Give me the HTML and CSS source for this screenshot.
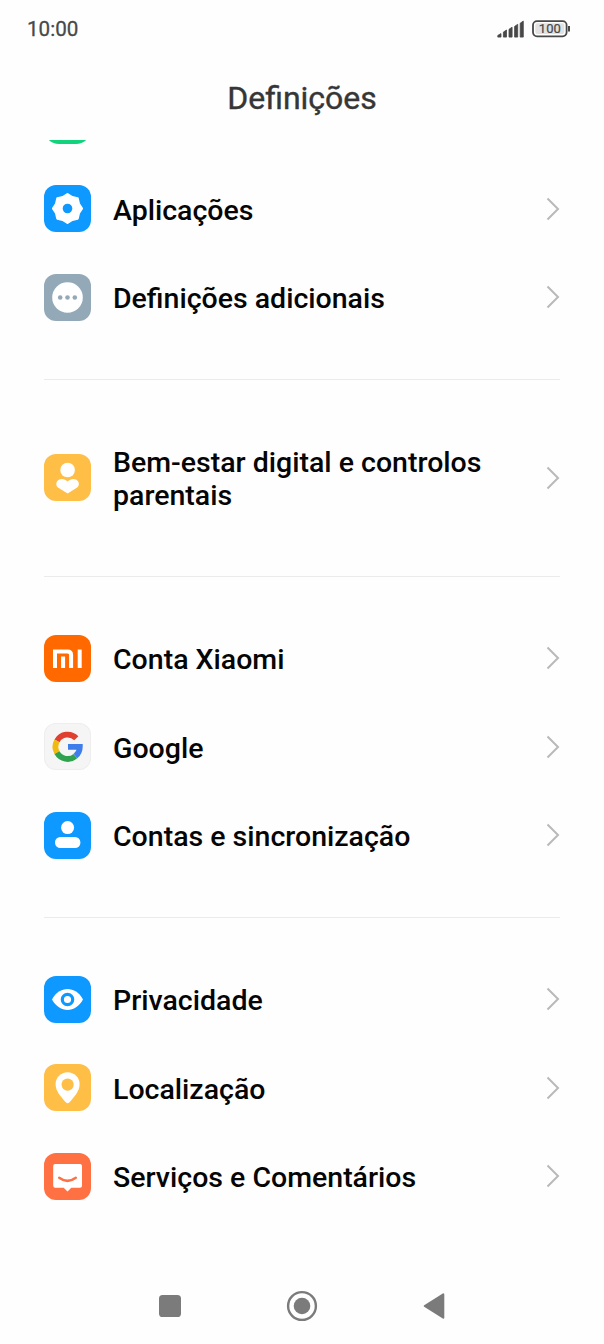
FILE: index.html
```html
<!DOCTYPE html>
<html lang="pt">
<head>
<meta charset="utf-8">
<title>Definições</title>
<link rel="stylesheet" href="styles.css">
</head>
<body>
<div class="screen">
  <div class="status">
    <span class="clock">10:00</span>
    <div class="indicators">
      <svg class="signal" width="27" height="18" viewBox="0 0 27 18" fill="#484848" stroke="#484848" stroke-width="0.8" stroke-linejoin="round">
        <path d="M0.8 15.4 4 13.6V17.1H0.8ZM6.4 12.1 9.5 10V17.1H6.4ZM12 9.3 15.1 7.2V17.1H12ZM17.6 6.4 20.7 4.3V17.1H17.6ZM23.2 3.2 26.3 1.1V17.1H23.2Z"/>
      </svg>
      <svg class="battery" width="40" height="18" viewBox="0 0 40 18">
        <rect x="1" y="1.1" width="33.6" height="15.2" rx="4" fill="#fff" stroke="#484848" stroke-width="1.8"/>
        <rect x="3.3" y="3.3" width="29" height="10.8" rx="2" fill="#e2e2e2"/>
        <path d="M37 6v5.4" stroke="#484848" stroke-width="2"/>
        <text class="level" x="17.8" y="13.2" text-anchor="middle">100</text>
      </svg>
    </div>
  </div>
  <h1 class="title">Definições</h1>
  <main class="list">
    <div class="row row-cut"><span class="icon green"></span></div>
    <div class="row">
      <svg class="icon blue" viewBox="0 0 47 47"><path d="M23.5 9.2 28.2 12.2 33.6 13.4 34.8 18.8 37.8 23.5 34.8 28.2 33.6 33.6 28.2 34.8 23.5 37.8 18.8 34.8 13.4 33.6 12.2 28.2 9.2 23.5 12.2 18.8 13.4 13.4 18.8 12.2Z" fill="#fff" stroke="#fff" stroke-width="2.4" stroke-linejoin="round"/><circle cx="23.5" cy="23.5" r="4.8" fill="#0d99ff"/></svg>
      <span class="label">Aplicações</span>
      <svg class="chevron" viewBox="0 0 14 24"><path d="M1.5 1.5 12 12 1.5 22.5"/></svg>
    </div>
    <div class="row">
      <svg class="icon slate" viewBox="0 0 47 47"><circle cx="23.5" cy="23.5" r="15.3" fill="#fff"/><g fill="#93a9b8"><circle cx="16.2" cy="23.5" r="2.3"/><circle cx="23.5" cy="23.5" r="2.3"/><circle cx="30.8" cy="23.5" r="2.3"/></g></svg>
      <span class="label">Definições adicionais</span>
      <svg class="chevron" viewBox="0 0 14 24"><path d="M1.5 1.5 12 12 1.5 22.5"/></svg>
    </div>
    <hr class="divider">
    <div class="row row-tall">
      <svg class="icon amber" viewBox="0 0 47 47"><circle cx="23.6" cy="16" r="7.3" fill="#fff"/><path d="M23.6 27.6C20.6 24.4 15.6 24.2 13.2 27.2 11.5 29.8 12.4 32.4 14.8 34L23.6 39.4 32.4 34C34.8 32.4 35.7 29.8 34 27.2 31.6 24.2 26.6 24.4 23.6 27.6Z" fill="#fff"/></svg>
      <span class="label">Bem-estar digital e controlos parentais</span>
      <svg class="chevron" viewBox="0 0 14 24"><path d="M1.5 1.5 12 12 1.5 22.5"/></svg>
    </div>
    <hr class="divider">
    <div class="row">
      <svg class="icon orange" viewBox="0 0 47 47"><path d="M11 33V16.5H23.6Q27.1 16.5 27.1 20V33M19.1 21.5V33M35.7 14.6V33" fill="none" stroke="#fff" stroke-width="4"/></svg>
      <span class="label">Conta Xiaomi</span>
      <svg class="chevron" viewBox="0 0 14 24"><path d="M1.5 1.5 12 12 1.5 22.5"/></svg>
    </div>
    <div class="row">
      <svg class="icon light" viewBox="0 0 47 47"><g fill="none" stroke-width="5.8"><path d="M32.3 15.3A12.1 12.1 0 0 0 13 17.9" stroke="#e04030"/><path d="M13 17.9A12.1 12.1 0 0 0 13 29.7" stroke="#f2b90f"/><path d="M13 29.7A12.1 12.1 0 0 0 31.4 33.1" stroke="#2fa24f"/><path d="M31.4 33.1A12.1 12.1 0 0 0 35.8 23.9H24" stroke="#3f7eea"/></g></svg>
      <span class="label">Google</span>
      <svg class="chevron" viewBox="0 0 14 24"><path d="M1.5 1.5 12 12 1.5 22.5"/></svg>
    </div>
    <div class="row">
      <svg class="icon blue" viewBox="0 0 47 47"><circle cx="23.6" cy="15.6" r="6.5" fill="#fff"/><rect x="11" y="25" width="25.4" height="11" rx="5.3" fill="#fff"/></svg>
      <span class="label">Contas e sincronização</span>
      <svg class="chevron" viewBox="0 0 14 24"><path d="M1.5 1.5 12 12 1.5 22.5"/></svg>
    </div>
    <hr class="divider">
    <div class="row">
      <svg class="icon blue" viewBox="0 0 47 47"><path d="M8 23.5C15.5 9.6 31.5 9.6 39 23.5 31.5 37.4 15.5 37.4 8 23.5Z" fill="#fff"/><circle cx="23.5" cy="23.5" r="5.2" fill="#fff" stroke="#0d99ff" stroke-width="3.2"/></svg>
      <span class="label">Privacidade</span>
      <svg class="chevron" viewBox="0 0 14 24"><path d="M1.5 1.5 12 12 1.5 22.5"/></svg>
    </div>
    <div class="row">
      <svg class="icon amber" viewBox="0 0 47 47"><path d="M22 38.4C17 33 11.6 27 11.6 20.2A12 12 0 0 1 35.6 20.2C35.6 27 30.2 33 25.2 38.4Q23.6 40 22 38.4Z" fill="#fff"/><circle cx="23.6" cy="20.6" r="6.1" fill="#ffbf47"/></svg>
      <span class="label">Localização</span>
      <svg class="chevron" viewBox="0 0 14 24"><path d="M1.5 1.5 12 12 1.5 22.5"/></svg>
    </div>
    <div class="row">
      <svg class="icon coral" viewBox="0 0 47 47"><path d="M11.2 11.1H36Q38 11.1 38 13.1V32.8Q38 34.8 36 34.8H27.3L23.5 38.6 19.7 34.8H11.2Q9.2 34.8 9.2 32.8V13.1Q9.2 11.1 11.2 11.1Z" fill="#fff"/><path d="M15.2 24.8Q23.5 31 31.8 24.8" fill="none" stroke="#ff7043" stroke-width="2.5" stroke-linecap="round"/></svg>
      <span class="label">Serviços e Comentários</span>
      <svg class="chevron" viewBox="0 0 14 24"><path d="M1.5 1.5 12 12 1.5 22.5"/></svg>
    </div>
  </main>
  <nav class="navbar">
    <svg class="nav" viewBox="0 0 32 32"><rect x="5" y="5" width="22" height="22" rx="3.6" fill="#7b7b7b"/></svg>
    <svg class="nav" viewBox="0 0 32 32"><circle cx="16" cy="16" r="13.9" fill="none" stroke="#7b7b7b" stroke-width="2.4"/><circle cx="16" cy="16" r="8.3" fill="#7b7b7b"/></svg>
    <svg class="nav" viewBox="0 0 32 32"><path d="M25.3 4.3V27.7L6.7 16Z" fill="#7b7b7b" stroke="#7b7b7b" stroke-width="2" stroke-linejoin="round"/></svg>
  </nav>
</div>
</body>
</html>
```
FILE: styles.css
```css
* { box-sizing: border-box; }
body { margin: 0; background: #fefefe; font-family: Roboto, "Noto Sans", sans-serif; }
.screen { width: 604px; height: 1344px; display: flex; flex-direction: column; background: #fefefe; overflow: hidden; }
.status { height: 58px; flex: none; display: flex; align-items: center; justify-content: space-between; padding: 0 32px 0 27px; }
.clock { font-size: 20.6px; font-weight: 400; -webkit-text-stroke: 0.3px #484848; color: #484848; }
.indicators { display: flex; align-items: center; gap: 8px; }
.signal, .battery { display: block; }
.level { font: 400 13px Roboto, sans-serif; fill: #484848; stroke: #484848; stroke-width: 0.2px; }
.title { margin: 0; height: 82px; flex: none; padding-top: 19.5px; text-align: center; font-size: 32px; line-height: 40px; font-weight: 400; -webkit-text-stroke: 0.4px #363636; color: #363636; }
.list { flex: none; height: 1128px; overflow: hidden; padding: 0 44px; }
.row { height: 88.5px; display: flex; align-items: center; }
.row-cut { height: 24.5px; align-items: flex-start; }
.row-cut .icon { margin-top: -43px; }
.row-tall { height: 121.5px; }
.icon { width: 47px; height: 47px; flex: none; border-radius: 12px; margin-right: 22px; display: block; }
.green { background: #12d37b; border-radius: 15px; }
.blue { background: #0d99ff; }
.slate { background: #93a9b8; }
.amber { background: #ffbf47; }
.orange { background: #ff6900; }
.light { background: #f5f5f5; box-shadow: inset 0 0 0 1px #eeeeee; }
.coral { background: #ff7043; }
.label { flex: 1; padding: 3px 40px 0 0; font-size: 28.5px; line-height: 33px; font-weight: 500; color: #050505; }
.chevron { width: 14px; height: 24px; flex: none; fill: none; stroke: #b9b9b9; stroke-width: 2; }
.divider { height: 1.5px; margin: 37px 0; border: 0; background: #ebebeb; }
.navbar { flex: 1; display: flex; justify-content: center; gap: 100px; padding: 22px 1px 0 0; }
.nav { width: 32px; height: 32px; }
```
